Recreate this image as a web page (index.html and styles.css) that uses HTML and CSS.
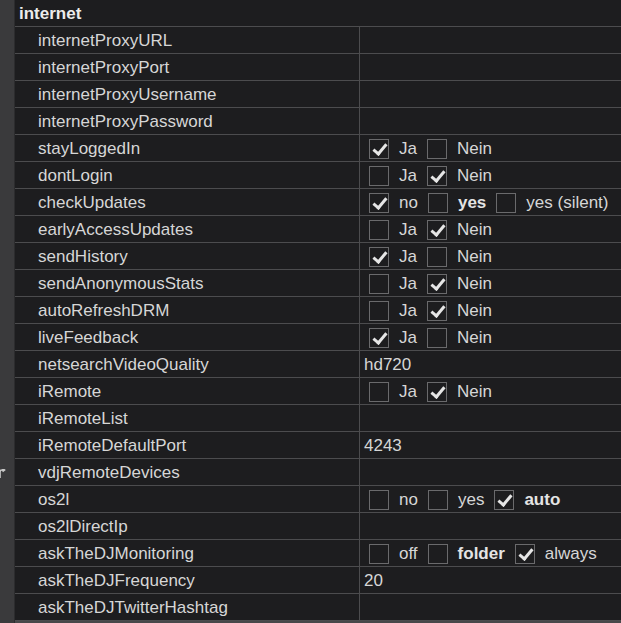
FILE: index.html
```html
<!DOCTYPE html>
<html>
<head>
<meta charset="utf-8">
<link rel="stylesheet" href="styles.css">
</head>
<body>
<div class="panel">
  <div class="strip">
    <svg class="strip-icon" width="7" height="10" viewBox="0 0 7 10"><path d="M1 9 L1 3 Q1 1 3 1 L5 1 M3.5 -0.5 L5.5 1 L3.5 2.5" fill="none" stroke="#c8c8c8" stroke-width="1.6"/></svg>
  </div>
  <div class="main">
    <div class="header">internet</div>

    <div class="row"><div class="name">internetProxyURL</div><div class="value"></div></div>
    <div class="row"><div class="name">internetProxyPort</div><div class="value"></div></div>
    <div class="row"><div class="name">internetProxyUsername</div><div class="value"></div></div>
    <div class="row"><div class="name">internetProxyPassword</div><div class="value"></div></div>

    <div class="row"><div class="name">stayLoggedIn</div><div class="value opts">
      <span class="cb on"></span><span class="lbl">Ja</span><span class="cb"></span><span class="lbl">Nein</span></div></div>
    <div class="row"><div class="name">dontLogin</div><div class="value opts">
      <span class="cb"></span><span class="lbl">Ja</span><span class="cb on"></span><span class="lbl">Nein</span></div></div>
    <div class="row"><div class="name">checkUpdates</div><div class="value opts">
      <span class="cb on"></span><span class="lbl">no</span><span class="cb"></span><span class="lbl bold">yes</span><span class="cb"></span><span class="lbl">yes (silent)</span></div></div>
    <div class="row"><div class="name">earlyAccessUpdates</div><div class="value opts">
      <span class="cb"></span><span class="lbl">Ja</span><span class="cb on"></span><span class="lbl">Nein</span></div></div>
    <div class="row"><div class="name">sendHistory</div><div class="value opts">
      <span class="cb on"></span><span class="lbl">Ja</span><span class="cb"></span><span class="lbl">Nein</span></div></div>
    <div class="row"><div class="name">sendAnonymousStats</div><div class="value opts">
      <span class="cb"></span><span class="lbl">Ja</span><span class="cb on"></span><span class="lbl">Nein</span></div></div>
    <div class="row"><div class="name">autoRefreshDRM</div><div class="value opts">
      <span class="cb"></span><span class="lbl">Ja</span><span class="cb on"></span><span class="lbl">Nein</span></div></div>
    <div class="row"><div class="name">liveFeedback</div><div class="value opts">
      <span class="cb on"></span><span class="lbl">Ja</span><span class="cb"></span><span class="lbl">Nein</span></div></div>
    <div class="row"><div class="name">netsearchVideoQuality</div><div class="value">hd720</div></div>
    <div class="row"><div class="name">iRemote</div><div class="value opts">
      <span class="cb"></span><span class="lbl">Ja</span><span class="cb on"></span><span class="lbl">Nein</span></div></div>
    <div class="row"><div class="name">iRemoteList</div><div class="value"></div></div>
    <div class="row"><div class="name">iRemoteDefaultPort</div><div class="value">4243</div></div>
    <div class="row"><div class="name">vdjRemoteDevices</div><div class="value"></div></div>
    <div class="row"><div class="name">os2l</div><div class="value opts">
      <span class="cb"></span><span class="lbl">no</span><span class="cb"></span><span class="lbl">yes</span><span class="cb on"></span><span class="lbl bold">auto</span></div></div>
    <div class="row"><div class="name">os2lDirectIp</div><div class="value"></div></div>
    <div class="row"><div class="name">askTheDJMonitoring</div><div class="value opts">
      <span class="cb"></span><span class="lbl">off</span><span class="cb"></span><span class="lbl bold">folder</span><span class="cb on"></span><span class="lbl">always</span></div></div>
    <div class="row"><div class="name">askTheDJFrequency</div><div class="value">20</div></div>
    <div class="row"><div class="name">askTheDJTwitterHashtag</div><div class="value"></div></div>
    <div class="bottom"></div>
  </div>
</div>
</body>
</html>
```

FILE: styles.css
```css
html, body {
  margin: 0;
  padding: 0;
  height: 100%;
  overflow: hidden;
  background: #1d1d1f;
}

.panel {
  display: flex;
  height: 623px;
  font-family: "Liberation Sans", Arial, sans-serif;
  font-size: 17px;
  color: #d6d6d6;
}

.strip {
  width: 14px;
  flex: none;
  background: #3a3a3c;
  border-right: 1px solid #2c2c2e;
  display: flex;
  flex-direction: column;
}

.strip-icon {
  margin-top: 469px;
  margin-left: -1px;
}

.main {
  flex: 1;
  display: flex;
  flex-direction: column;
  min-width: 0;
}

.header {
  box-sizing: border-box;
  height: 27px;
  padding-top: 1px;
  line-height: 26px;
  border-bottom: 1px solid #4c4c4e;
  padding-left: 4px;
  font-weight: bold;
  color: #ececec;
  flex: none;
}

.row {
  display: grid;
  grid-template-columns: 345px 1fr;
  height: 26px;
  border-bottom: 1px solid #4c4c4e;
  flex: none;
}

.name {
  box-sizing: border-box;
  border-right: 1px solid #4c4c4e;
  padding-left: 23px;
  padding-top: 1px;
  line-height: 26px;
  height: 26px;
  white-space: nowrap;
}

.value {
  box-sizing: border-box;
  padding-left: 4px;
  padding-top: 1px;
  line-height: 26px;
  height: 26px;
  white-space: nowrap;
  overflow: hidden;
}

.opts {
  display: flex;
  align-items: center;
  padding-left: 9px;
  padding-top: 0;
}

.cb {
  box-sizing: border-box;
  width: 20px;
  height: 20px;
  border: 1px solid #6a6a6c;
  margin-top: 1px;
  flex: none;
  position: relative;
}

.cb.on::after {
  content: "";
  position: absolute;
  left: 6px;
  top: 1px;
  width: 5px;
  height: 11px;
  border-right: 3px solid #e6e6e6;
  border-bottom: 3px solid #e6e6e6;
  transform: rotate(40deg);
}

.lbl {
  margin-left: 10px;
  margin-right: 10px;
  padding-top: 2px;
}

.bold {
  font-weight: bold;
  color: #e4e4e4;
}

.bottom {
  flex: 1;
  background: #48484a;
}
```
